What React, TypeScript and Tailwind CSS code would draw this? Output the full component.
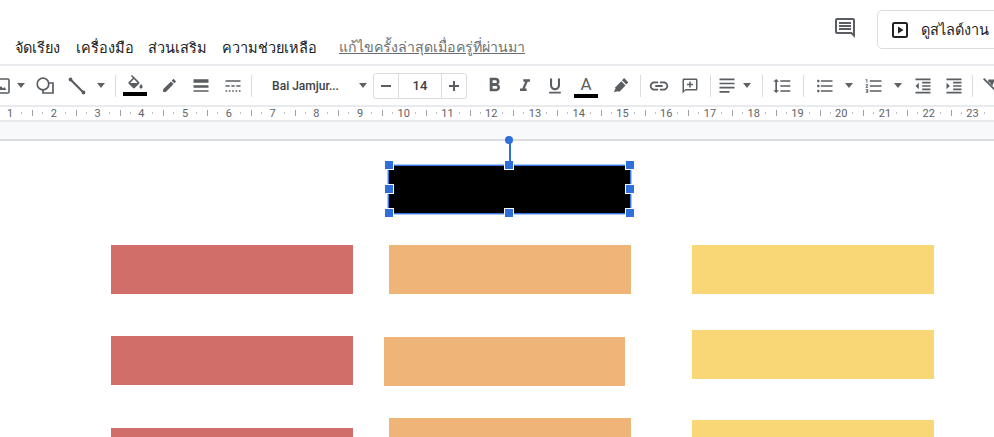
import type { ReactNode } from 'react'

const ICONS = {
  bold: 'M15.6 10.79c.97-.67 1.65-1.77 1.65-2.79 0-2.26-1.75-4-4-4H7v14h7.04c2.09 0 3.71-1.7 3.71-3.79 0-1.52-.86-2.82-2.15-3.42zM10 6.5h3c.83 0 1.5.67 1.5 1.5s-.67 1.5-1.5 1.5h-3v-3zm3.5 9H10v-3h3.5c.83 0 1.5.67 1.5 1.5s-.67 1.5-1.5 1.5z',
  italic: 'M10 4v3h2.21l-3.42 8H6v3h8v-3h-2.21l3.42-8H18V4z',
  underline: 'M12 17c3.31 0 6-2.69 6-6V3h-2.5v8c0 1.93-1.57 3.5-3.5 3.5S8.5 12.93 8.5 11V3H6v8c0 3.31 2.69 6 6 6zm-7 2v2h14v-2H5z',
  pencil: 'M3 17.25V21h3.75L17.81 9.94l-3.75-3.75L3 17.25zM20.71 7.04c.39-.39.39-1.02 0-1.41l-2.34-2.34c-.39-.39-1.02-.39-1.41 0l-1.83 1.83 3.75 3.75 1.83-1.83z',
  highlighter: 'M4 21l2.5-5-1-1 9-9 6 6-9 9-1-1-6.5 1zM15.5 4.5l3-3 6 6-3 3z',
  link: 'M3.9 12c0-1.71 1.39-3.1 3.1-3.1h4V7H7c-2.76 0-5 2.24-5 5s2.24 5 5 5h4v-1.9H7c-1.71 0-3.1-1.39-3.1-3.1zM8 13h8v-2H8v2zm9-6h-4v1.9h4c1.71 0 3.1 1.39 3.1 3.1s-1.39 3.1-3.1 3.1h-4V17h4c2.76 0 5-2.24 5-5s-2.24-5-5-5z',
  addComment: 'M20 2H4c-1.1 0-2 .9-2 2v18l4-4h14c1.1 0 2-.9 2-2V4c0-1.1-.9-2-2-2zm0 14H6l-2 2V4h16v12zM11 6h2v3h3v2h-3v3h-2v-3H8V9h3z',
  alignLeft: 'M3 3h18v2H3zM3 8h18v2H3zM3 13h18v2H3zM3 18h12v2H3z',
  lineSpacing: 'M6 7h2.5L5 3.5 1.5 7H4v10H1.5L5 20.5 8.5 17H6V7zm4-2v2h12V5H10zm0 14h12v-2H10v2zm0-6h12v-2H10v2z',
  bullets: 'M4 10.5c-.83 0-1.5.67-1.5 1.5s.67 1.5 1.5 1.5 1.5-.67 1.5-1.5-.67-1.5-1.5-1.5zm0-6c-.83 0-1.5.67-1.5 1.5S3.17 7.5 4 7.5 5.5 6.83 5.5 6 4.83 4.5 4 4.5zm0 12c-.83 0-1.5.68-1.5 1.5s.68 1.5 1.5 1.5 1.5-.68 1.5-1.5-.67-1.5-1.5-1.5zM7 19h14v-2H7v2zm0-6h14v-2H7v2zm0-8v2h14V5H7z',
  numbered: 'M2 17h2v.5H3v1h1v.5H2v1h3v-4H2v1zm1-9h1V4H2v1h1v3zm-1 3h1.8L2 13.1v.9h3v-1H3.2L5 10.9V10H2v1zm5-6v2h14V5H7zm0 14h14v-2H7v2zm0-6h14v-2H7v2z',
  outdent: 'M11 17h10v-2H11v2zm-8-5l4 4V8l-4 4zm0 9h18v-2H3v2zM3 3v2h18V3H3zm8 6h10V7H11v2zm0 4h10v-2H11v2z',
  indent: 'M3 21h18v-2H3v2zM3 8v8l4-4-4-4zm8 9h10v-2H11v2zM3 3v2h18V3H3zm8 6h10V7H11v2zm0 4h10v-2H11v2z',
  weight: 'M3 4h18v4H3zM3 11h18v3H3zM3 17h18v2H3z',
  dash: 'M3 5h18v2H3zM3 11h5v2H3zM10 11h4v2h-4zM16 11h5v2h-5zM3 17h2v2H3zM7 17h2v2H7zM11 17h2v2h-2zM15 17h2v2h-2zM19 17h2v2h-2z',
  clear: 'M3.3 4.7l1.4-1.4 16 16-1.4 1.4zM9 5h12v3h-6l-1.5 3.6-2.4-2.4L11 8H9z',
}

function Icon({ d, size = 20 }: { d: string; size?: number }) {
  return (
    <svg width={size} height={size} viewBox="0 0 24 24" fill="#5a5e62" className="shrink-0">
      <path d={d} />
    </svg>
  )
}

function Slot({ w, children }: { w: string; children?: ReactNode }) {
  return <div className={`${w} h-full flex items-center justify-center shrink-0`}>{children}</div>
}

function Caret() {
  return <div className="w-0 h-0 shrink-0 border-x-[4.5px] border-x-transparent border-t-[5px] border-t-[#5f6368]" />
}

function Sep() {
  return <div className="w-px h-[22px] bg-[#dadce0] shrink-0" />
}

function Header() {
  return (
    <header className="h-[66px] flex justify-between border-b-2 border-[#e8eaed]">
      <nav className="flex items-end pl-[15px] pb-[6px] text-[14.5px] leading-[22px] font-medium text-[#202225]">
        <span className="w-[61px]">จัดเรียง</span>
        <span className="w-[72px]">เครื่องมือ</span>
        <span className="w-[74px]">ส่วนเสริม</span>
        <span className="w-[117px]">ความช่วยเหลือ</span>
        <span className="text-[#6b6f73] underline font-normal text-[14.2px]">แก้ไขครั้งล่าสุดเมื่อครู่ที่ผ่านมา</span>
      </nav>
      <div className="flex items-start pt-[10px]">
        <div className="w-[24px] h-[24px] mt-[6px] mr-[20px]">
          <svg width="24" height="24" viewBox="0 0 24 24" fill="#5a5e62">
            <path d="M20 17.17 18.83 16H4V4h16v13.17zM20 2H4c-1.1 0-2 .9-2 2v12c0 1.1.9 2 2 2h14l4 4V4c0-1.1-.9-2-2-2zM6 12h12v2H6zM6 9h12v2H6zM6 6h12v2H6z" />
          </svg>
        </div>
        <button className="w-[140px] h-[39px] mr-[-23px] flex items-center pl-[13px] border border-[#dadce0] rounded-[5px] text-[14.5px] font-medium text-[#202225]">
          <svg width="18" height="18" viewBox="0 0 18 18" className="mr-[12px]">
            <rect x="2" y="2" width="14" height="14" rx="1.5" fill="none" stroke="#202124" strokeWidth="2" />
            <path d="M7 5.5v7l5.5-3.5z" fill="#202124" />
          </svg>
          ดูสไลด์งาน
        </button>
      </div>
    </header>
  )
}

function Toolbar() {
  return (
    <div className="h-[41px] flex items-center ml-[-8px] overflow-hidden border-b-2 border-[#e8eaed] text-[#3c4043]">
      <Slot w="w-[20px]">
        <svg width="20" height="20" viewBox="0 0 20 20" fill="none" stroke="#5a5e62" strokeWidth="1.6">
          <rect x="3" y="3" width="14" height="14" rx="1" />
          <path d="M6 14l3-4 2 2.5 1.5-1.5 2 3z" fill="#5a5e62" stroke="none" />
        </svg>
      </Slot>
      <Slot w="w-[18px]"><Caret /></Slot>
      <Slot w="w-[30px]">
        <svg width="20" height="20" viewBox="0 0 20 20" fill="none" stroke="#5a5e62" strokeWidth="1.7">
          <circle cx="8" cy="8" r="5.8" />
          <path d="M13 7h5v10H8v-3" />
        </svg>
      </Slot>
      <Slot w="w-[34px]">
        <svg width="20" height="20" viewBox="0 0 20 20" fill="#5a5e62" stroke="#5a5e62" strokeWidth="2.2" strokeLinecap="round">
          <path d="M4 4L16 16" />
          <circle cx="3.5" cy="3.5" r="0.8" />
          <circle cx="16.5" cy="16.5" r="0.8" />
        </svg>
      </Slot>
      <Slot w="w-[14px]"><Caret /></Slot>
      <Slot w="w-[7px]" />
      <Sep />
      <Slot w="w-[38px]">
        <div className="flex flex-col items-center">
          <Icon d="M16.56 8.94L7.62 0 6.21 1.41l2.38 2.38-5.15 5.15c-.59.59-.59 1.54 0 2.12l5.5 5.5c.29.29.68.44 1.06.44s.77-.15 1.06-.44l5.5-5.5c.59-.58.59-1.53 0-2.12zM5.21 10L10 5.21 14.79 10H5.21zM19 11.5s-2 2.17-2 3.5c0 1.1.9 2 2 2s2-.9 2-2c0-1.33-2-3.5-2-3.5z" size={19} />
          <div className="w-[24px] h-[4px] bg-black mt-[-2px]" />
        </div>
      </Slot>
      <Slot w="w-[30px]"><Icon d={ICONS.pencil} size={17} /></Slot>
      <Slot w="w-[34px]"><Icon d={ICONS.weight} /></Slot>
      <Slot w="w-[30px]"><Icon d={ICONS.dash} /></Slot>
      <Slot w="w-[3px]" />
      <Sep />
      <Slot w="w-[107px]">
        <span className="text-[12px] font-medium whitespace-nowrap" style={{ fontFamily: 'Roboto, sans-serif' }}>Bai Jamjur...</span>
      </Slot>
      <Slot w="w-[8px]"><Caret /></Slot>
      <Slot w="w-[6px]" />
      <div className="w-[94px] h-[26px] flex border border-[#dadce0] rounded-[3px] shrink-0">
        <div className="w-[25px] flex items-center justify-center border-r border-[#dadce0]">
          <div className="w-[10px] h-[2px] bg-[#5a5e62]" />
        </div>
        <div className="w-[43px] flex items-center justify-center text-[13px] font-medium border-r border-[#dadce0]" style={{ fontFamily: 'Roboto, sans-serif' }}>14</div>
        <div className="flex-1 flex items-center justify-center">
          <div className="relative w-[10px] h-[2px] bg-[#5a5e62]">
            <div className="absolute left-[4px] top-[-4px] w-[2px] h-[10px] bg-[#5a5e62]" />
          </div>
        </div>
      </div>
      <Slot w="w-[12px]" />
      <Slot w="w-[30px]"><Icon d={ICONS.bold} size={23} /></Slot>
      <Slot w="w-[32px]"><Icon d={ICONS.italic} size={20} /></Slot>
      <Slot w="w-[28px]"><Icon d={ICONS.underline} size={20} /></Slot>
      <Slot w="w-[34px]">
        <div className="flex flex-col items-center pt-[3px]">
          <span className="text-[17px] leading-[17px] text-[#5a5e62]" style={{ fontFamily: 'Roboto, sans-serif' }}>A</span>
          <div className="w-[24px] h-[4px] bg-black mt-[1px]" />
        </div>
      </Slot>
      <Slot w="w-[32px]"><Icon d={ICONS.highlighter} size={17} /></Slot>
      <Slot w="w-[5px]" />
      <Sep />
      <Slot w="w-[36px]"><Icon d={ICONS.link} size={22} /></Slot>
      <Slot w="w-[26px]"><Icon d={ICONS.addComment} size={18} /></Slot>
      <Slot w="w-[7px]" />
      <Sep />
      <Slot w="w-[32px]"><Icon d={ICONS.alignLeft} size={20} /></Slot>
      <Slot w="w-[8px]"><Caret /></Slot>
      <Slot w="w-[11px]" />
      <Sep />
      <Slot w="w-[38px]"><Icon d={ICONS.lineSpacing} size={20} /></Slot>
      <Slot w="w-[2px]" />
      <Sep />
      <Slot w="w-[42px]"><Icon d={ICONS.bullets} size={20} /></Slot>
      <Slot w="w-[6px]"><Caret /></Slot>
      <Slot w="w-[44px]"><Icon d={ICONS.numbered} size={20} /></Slot>
      <Slot w="w-[4px]"><Caret /></Slot>
      <Slot w="w-[46px]"><Icon d={ICONS.outdent} size={20} /></Slot>
      <Slot w="w-[15px]"><Icon d={ICONS.indent} size={20} /></Slot>
      <Slot w="w-[11px]" />
      <Sep />
      <Slot w="w-[36px]"><Icon d={ICONS.clear} size={22} /></Slot>
    </div>
  )
}

function Ruler() {
  const nums = Array.from({ length: 23 }, (_, i) => i + 1)
  return (
    <div className="h-[15px] flex overflow-hidden border-b-2 border-[#e8eaed] ml-[-12px]">
      {nums.map((n) => (
        <div key={n} className="relative w-[43.75px] h-full shrink-0">
          <span className="absolute left-0 top-0 w-[44px] text-center text-[11px] leading-[13px] text-[#5f6368]" style={{ fontFamily: 'Roboto, sans-serif' }}>
            {n}
          </span>
          <i className="absolute left-[33px] top-[5px] w-px h-[2px] bg-[#bdc1c6]" />
          <i className="absolute left-[44px] top-[3px] w-px h-[6px] bg-[#9aa0a6]" />
          <i className="absolute left-[54px] top-[5px] w-px h-[2px] bg-[#bdc1c6]" />
        </div>
      ))}
    </div>
  )
}

const BLOCKS = [
  'left-[111px] top-[104px] bg-[#d26e6a]',
  'left-[389px] top-[104px] bg-[#eeb478]',
  'left-[692px] top-[104px] bg-[#f9d777]',
  'left-[111px] top-[195px] bg-[#d26e6a]',
  'left-[383.5px] top-[196px] bg-[#eeb478]',
  'left-[692px] top-[189px] bg-[#f9d777]',
  'left-[111px] top-[287px] bg-[#d26e6a]',
  'left-[389px] top-[277px] bg-[#eeb478]',
  'left-[692px] top-[279px] bg-[#f9d777]',
]

const HANDLES = [
  'left-[-5px] top-[-6px]',
  'left-[115px] top-[-6px]',
  'right-[-5px] top-[-6px]',
  'left-[-5px] top-[18px]',
  'right-[-5px] top-[18px]',
  'left-[-5px] bottom-[-5px]',
  'left-[115px] bottom-[-5px]',
  'right-[-5px] bottom-[-5px]',
]

function Canvas() {
  return (
    <div className="relative h-[296px] overflow-hidden bg-white">
      {BLOCKS.map((b) => (
        <div key={b} className={`absolute w-[241.5px] h-[48.5px] ${b}`} />
      ))}
      <div className="absolute left-[388px] top-[24px] w-[243px] h-[49px] bg-black border border-[#3b78e7] outline outline-1 outline-[#a9c6f5]">
        {HANDLES.map((h) => (
          <div key={h} className={`absolute w-[10px] h-[10px] bg-[#2f6fdb] border border-white ${h}`} />
        ))}
      </div>
    </div>
  )
}

export default function App() {
  return (
    <div className="relative w-[994px] h-[437px] overflow-hidden bg-white" style={{ fontFamily: '"Noto Sans", "Liberation Sans", sans-serif' }}>
      <Header />
      <Toolbar />
      <Ruler />
      <div className="h-[19px] bg-[#f8f9fa] border-b-2 border-[#dadce0]" />
      <Canvas />
      <div className="absolute left-[505px] top-[136px] w-[8px] h-[8px] rounded-full bg-[#2f6fdb]" />
      <div className="absolute left-[509px] top-[143px] w-[1.5px] h-[19px] bg-[#2f6fdb]" />
    </div>
  )
}
